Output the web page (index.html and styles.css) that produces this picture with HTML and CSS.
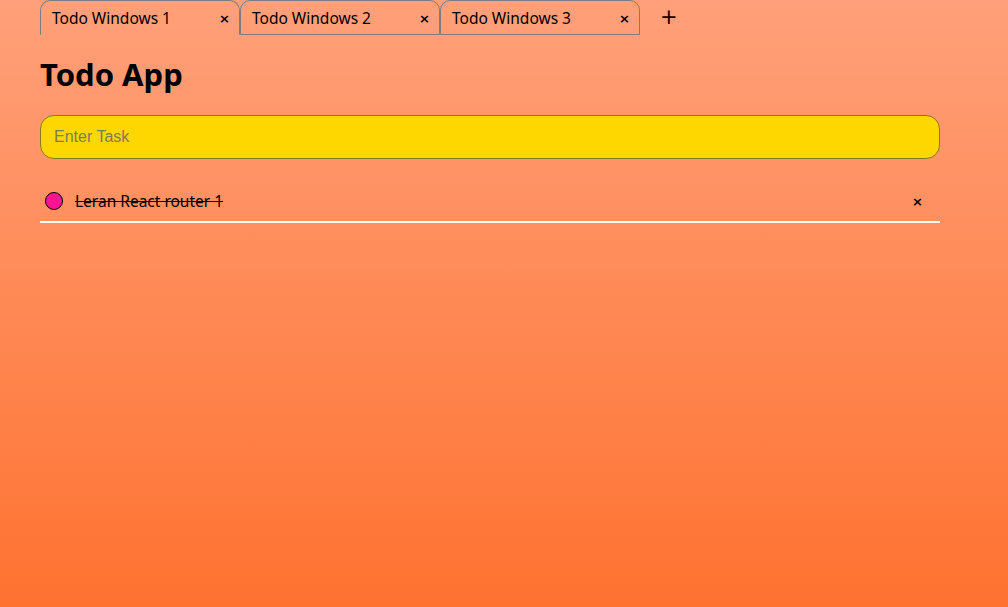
FILE: index.html
```html
<!DOCTYPE html>
<html lang="en">
<head>
<meta charset="utf-8">
<title>Todo App</title>
<link rel="stylesheet" href="styles.css">
</head>
<body>
<div class="app">
  <nav class="tabs">
    <div class="tab active"><span class="tab-title">Todo Windows 1</span><button class="tab-close">×</button></div>
    <div class="tab"><span class="tab-title">Todo Windows 2</span><button class="tab-close">×</button></div>
    <div class="tab"><span class="tab-title">Todo Windows 3</span><button class="tab-close">×</button></div>
    <button class="tab-add">+</button>
  </nav>
  <h1 class="title">Todo App</h1>
  <input class="task-input" type="text" placeholder="Enter Task">
  <ul class="list">
    <li class="item">
      <span class="dot"></span>
      <span class="item-text">Leran React router 1</span>
      <button class="item-del">×</button>
    </li>
  </ul>
</div>
</body>
</html>
```
FILE: styles.css
```css
html, body {
  margin: 0;
  height: 100%;
}
body {
  background: linear-gradient(to bottom, #ffa07a 0%, #ff7230 100%);
  font-family: "Noto Sans", "DejaVu Sans", sans-serif;
  color: #000;
}
.app {
  width: 900px;
  padding-left: 40px;
}
.tabs {
  display: flex;
  align-items: flex-end;
  height: 35px;
}
.tab {
  width: 200px;
  height: 35px;
  box-sizing: border-box;
  border: 1px solid #7d7d7d;
  border-radius: 10px 10px 0 0;
  display: flex;
  align-items: center;
  justify-content: space-between;
  padding: 0 9px 0 11px;
  font-size: 15.5px;
}
.tab.active {
  border-bottom-color: transparent;
}
.tab-title {
  padding-top: 1px;
}
.tab-close {
  background: none;
  border: none;
  font-size: 13px;
  font-family: "DejaVu Sans", sans-serif;
  font-weight: bold;
  padding: 2px 0 0;
  color: #000;
}
.tab-add {
  background: none;
  border: none;
  font-size: 21px;
  font-family: "DejaVu Sans", sans-serif;
  padding: 0;
  margin-left: 20px;
  height: 35px;
  line-height: 33px;
  align-self: flex-start;
  color: #000;
}
.title {
  font-size: 31px;
  font-weight: bold;
  margin: 19px 0 21px;
  line-height: 40px;
  height: 40px;
}
.task-input {
  display: block;
  width: 900px;
  height: 44px;
  box-sizing: border-box;
  border: 1px solid #8a7a14;
  border-radius: 14px;
  background: #ffd700;
  padding: 0 13px;
  font-family: "Liberation Sans", Arial, sans-serif;
  font-size: 16px;
  outline: none;
}
.task-input::placeholder {
  color: #7f7a5a;
}
.list {
  list-style: none;
  margin: 22px 0 0;
  padding: 0;
}
.item {
  display: flex;
  align-items: center;
  height: 42px;
  border-bottom: 2px solid #fff;
  padding: 0 0 0 5px;
  box-sizing: border-box;
}
.dot {
  width: 18px;
  height: 18px;
  box-sizing: border-box;
  border: 1px solid #000;
  border-radius: 50%;
  background: #ff1493;
  margin-right: 12px;
}
.item-text {
  flex: 1;
  font-size: 15.5px;
  text-decoration: line-through;
}
.item-del {
  background: none;
  border: none;
  font-family: "DejaVu Sans", sans-serif;
  font-weight: bold;
  font-size: 13px;
  padding: 0;
  margin-right: 17px;
  color: #000;
}
```
